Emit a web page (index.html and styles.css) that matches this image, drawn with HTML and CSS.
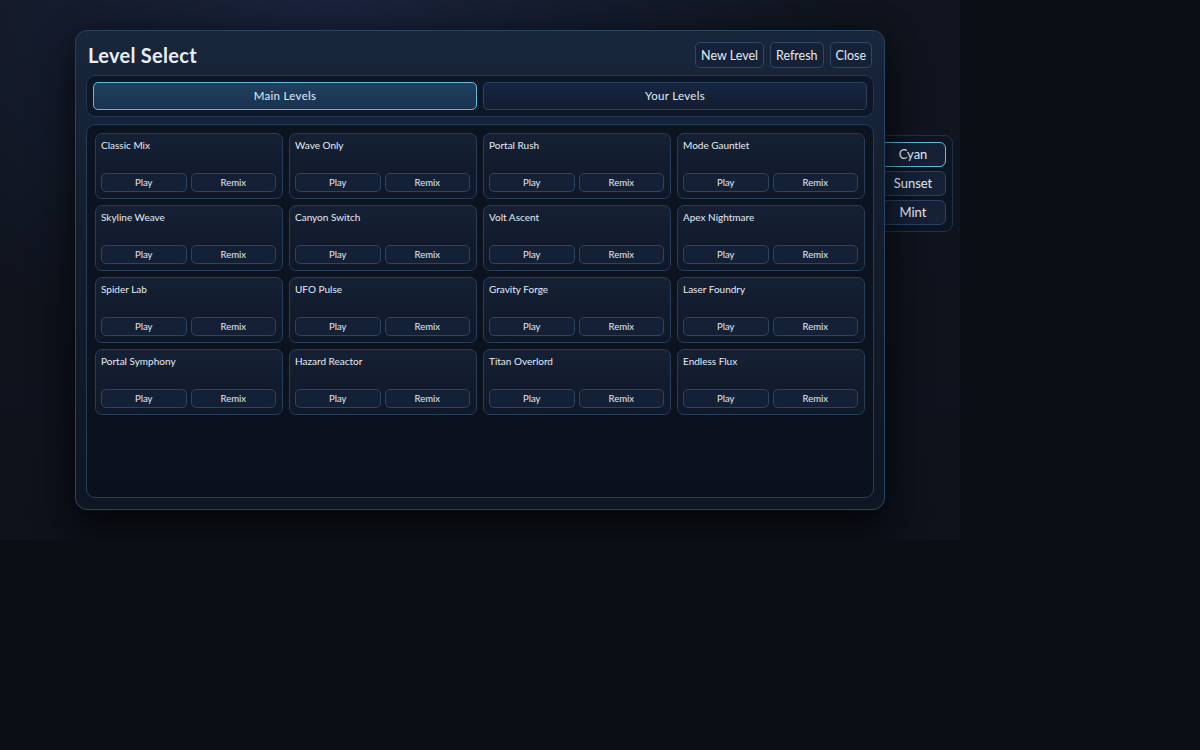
FILE: index.html
```html
<!DOCTYPE html>
<html>
<head>
<meta charset="utf-8">
<link rel="stylesheet" href="styles.css">
</head>
<body>
<div class="stage">
  <aside class="themes">
    <button class="theme active">Cyan</button>
    <button class="theme">Sunset</button>
    <button class="theme">Mint</button>
  </aside>
  <section class="panel">
    <header class="head">
      <h1 class="title">Level Select</h1>
      <div class="actions">
        <button class="hbtn">New Level</button>
        <button class="hbtn">Refresh</button>
        <button class="hbtn">Close</button>
      </div>
    </header>
    <nav class="tabs">
      <button class="tab active">Main Levels</button>
      <button class="tab">Your Levels</button>
    </nav>
    <div class="grid">
      <div class="card"><div class="name">Classic Mix</div><div class="btns"><button class="cbtn">Play</button><button class="cbtn">Remix</button></div></div>
      <div class="card"><div class="name">Wave Only</div><div class="btns"><button class="cbtn">Play</button><button class="cbtn">Remix</button></div></div>
      <div class="card"><div class="name">Portal Rush</div><div class="btns"><button class="cbtn">Play</button><button class="cbtn">Remix</button></div></div>
      <div class="card"><div class="name">Mode Gauntlet</div><div class="btns"><button class="cbtn">Play</button><button class="cbtn">Remix</button></div></div>
      <div class="card"><div class="name">Skyline Weave</div><div class="btns"><button class="cbtn">Play</button><button class="cbtn">Remix</button></div></div>
      <div class="card"><div class="name">Canyon Switch</div><div class="btns"><button class="cbtn">Play</button><button class="cbtn">Remix</button></div></div>
      <div class="card"><div class="name">Volt Ascent</div><div class="btns"><button class="cbtn">Play</button><button class="cbtn">Remix</button></div></div>
      <div class="card"><div class="name">Apex Nightmare</div><div class="btns"><button class="cbtn">Play</button><button class="cbtn">Remix</button></div></div>
      <div class="card"><div class="name">Spider Lab</div><div class="btns"><button class="cbtn">Play</button><button class="cbtn">Remix</button></div></div>
      <div class="card"><div class="name">UFO Pulse</div><div class="btns"><button class="cbtn">Play</button><button class="cbtn">Remix</button></div></div>
      <div class="card"><div class="name">Gravity Forge</div><div class="btns"><button class="cbtn">Play</button><button class="cbtn">Remix</button></div></div>
      <div class="card"><div class="name">Laser Foundry</div><div class="btns"><button class="cbtn">Play</button><button class="cbtn">Remix</button></div></div>
      <div class="card"><div class="name">Portal Symphony</div><div class="btns"><button class="cbtn">Play</button><button class="cbtn">Remix</button></div></div>
      <div class="card"><div class="name">Hazard Reactor</div><div class="btns"><button class="cbtn">Play</button><button class="cbtn">Remix</button></div></div>
      <div class="card"><div class="name">Titan Overlord</div><div class="btns"><button class="cbtn">Play</button><button class="cbtn">Remix</button></div></div>
      <div class="card"><div class="name">Endless Flux</div><div class="btns"><button class="cbtn">Play</button><button class="cbtn">Remix</button></div></div>
    </div>
  </section>
</div>
</body>
</html>
```
FILE: styles.css
```css
* { box-sizing: border-box; }
html, body {
  margin: 0;
  height: 100%;
  background: #0b0e15;
  font-family: "Lato", "Noto Sans", sans-serif;
  color: #e4ecf6;
}
button {
  font-family: inherit;
  color: #e4ecf6;
  cursor: pointer;
}
.stage {
  position: relative;
  width: 960px;
  height: 540px;
  background:
    radial-gradient(ellipse 520px 360px at 330px 0px, rgba(30, 40, 70, 0.75), rgba(20, 28, 48, 0) 100%),
    linear-gradient(180deg, #10151f 0%, #0d121b 100%);
  overflow: hidden;
  padding: 30px 0 0 75px;
}
.panel {
  position: relative;
  z-index: 2;
  width: 810px;
  height: 480px;
  border: 1px solid #284563;
  border-radius: 12px;
  background: linear-gradient(180deg, #18263b 0%, #131d2e 45%, #0f1624 100%);
  box-shadow: 0 22px 40px rgba(0, 0, 0, 0.55), 0 0 30px rgba(0, 0, 0, 0.35);
  padding: 11px 10px;
  display: flex;
  flex-direction: column;
  gap: 7px;
}
.head {
  height: 26px;
  display: flex;
  align-items: center;
  justify-content: space-between;
  padding: 0 2px;
}
.title {
  margin: 0;
  font-size: 20px;
  font-weight: 700;
  letter-spacing: 0.3px;
  color: #e8eef7;
}
.actions {
  display: flex;
  gap: 6px;
}
.hbtn {
  height: 26px;
  padding: 0 5px;
  font-size: 12.5px;
  background: #142136;
  border: 1px solid #2e4968;
  border-radius: 5px;
}
.tabs {
  height: 42px;
  border: 1px solid #213952;
  border-radius: 9px;
  background: #0e1727;
  padding: 6px;
  display: flex;
  gap: 6px;
}
.tab {
  flex: 1;
  height: 28px;
  font-size: 11.5px;
  letter-spacing: 0.3px;
  padding: 0 0 1px;
  background: linear-gradient(180deg, #162640, #121d32);
  border: 1px solid #2a425e;
  border-radius: 5px;
}
.tab.active {
  background: linear-gradient(180deg, #21405f, #193250);
  border-color: #63bcd9;
}
.grid {
  flex: 1;
  border: 1px solid #223f5a;
  border-radius: 9px;
  background: linear-gradient(180deg, #0d1421, #0b111c);
  padding: 8px;
  display: grid;
  grid-template-columns: repeat(4, 1fr);
  grid-auto-rows: 66px;
  align-content: start;
  gap: 6px;
}
.card {
  border: 1px solid #253e5b;
  border-radius: 7px;
  background: linear-gradient(180deg, #152034, #0f1828);
  padding: 4px 6px 6px 5px;
  display: flex;
  flex-direction: column;
  justify-content: space-between;
}
.name {
  font-size: 10px;
  line-height: 14px;
  color: #e6edf6;
}
.btns {
  display: flex;
  gap: 4px;
}
.cbtn {
  flex: 1;
  height: 19px;
  font-size: 9.5px;
  padding: 0;
  background: #132035;
  border: 1px solid #2b4564;
  border-radius: 5px;
}
.themes {
  position: absolute;
  z-index: 1;
  left: 873px;
  top: 135px;
  width: 80px;
  padding: 6px;
  border: 1px solid #1e3349;
  border-radius: 8px;
  background: #0d1522;
  display: flex;
  flex-direction: column;
  gap: 4px;
}
.theme {
  height: 25px;
  width: 66px;
  font-size: 13px;
  padding: 0 0 1px;
  background: #142136;
  border: 1px solid #2b4362;
  border-radius: 6px;
}
.theme.active {
  border-color: #63bcd9;
}
```
